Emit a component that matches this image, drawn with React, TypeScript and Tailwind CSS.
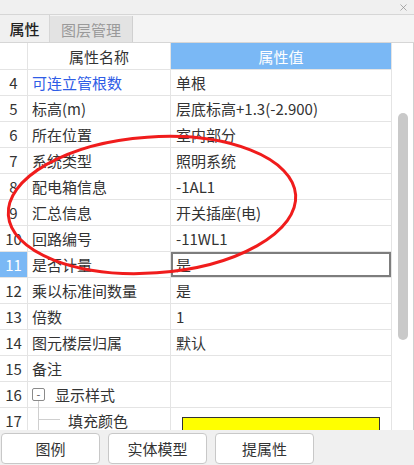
import { X } from 'lucide-react';

type Row = {
  no: number;
  name: string;
  value?: string;
  blue?: boolean;
  selected?: boolean;
};

const rows: Row[] = [
  { no: 4, name: '可连立管根数', value: '单根', blue: true },
  { no: 5, name: '标高(m)', value: '层底标高+1.3(-2.900)' },
  { no: 6, name: '所在位置', value: '室内部分' },
  { no: 7, name: '系统类型', value: '照明系统' },
  { no: 8, name: '配电箱信息', value: '-1AL1' },
  { no: 9, name: '汇总信息', value: '开关插座(电)' },
  { no: 10, name: '回路编号', value: '-11WL1' },
  { no: 11, name: '是否计量', value: '是', selected: true },
  { no: 12, name: '乘以标准间数量', value: '是' },
  { no: 13, name: '倍数', value: '1' },
  { no: 14, name: '图元楼层归属', value: '默认' },
  { no: 15, name: '备注', value: '' },
];

function PropRow({ row }: { row: Row }) {
  return (
    <div className="flex h-[26px] border-b border-[#e4e4e4]">
      <div
        className={`w-[28px] shrink-0 border-r border-[#e4e4e4] flex items-center justify-center ${
          row.selected ? 'bg-[#7ab8f5] text-white' : 'text-[#333]'
        }`}
      >
        {row.no}
      </div>
      <div
        className={`w-[143px] shrink-0 border-r border-[#e4e4e4] flex items-center pl-[4px] ${
          row.blue ? 'text-[#2f5de6]' : 'text-[#333]'
        }`}
      >
        {row.name}
      </div>
      <div
        className={`flex-1 flex items-center text-[#333] ${
          row.selected ? 'border-2 border-[#7d7d7d] pl-[3px]' : 'pl-[5px]'
        }`}
      >
        {row.value}
      </div>
    </div>
  );
}

export default function App() {
  return (
    <div className="relative w-[414px] h-[465px] overflow-hidden bg-[#f0f0f0] text-[15px] leading-none font-['Noto_Sans_CJK_SC','Microsoft_YaHei',sans-serif]">
      {/* title strip */}
      <div className="h-[15px] border-b border-[#d6d6d6] flex items-center justify-end pr-[5px]">
        <X size={11} strokeWidth={1.5} className="text-[#8a8a8a]" />
      </div>

      {/* tabs */}
      <div className="h-[28px] flex bg-[#f4f4f4] border-b border-[#d6d6d6]">
        <div className="w-[50px] flex items-center justify-center font-medium text-[#222] bg-[#f0f0f0] border-r border-[#d6d6d6]">
          属性
        </div>
        <div className="w-[83px] mt-[1px] flex items-center justify-center text-[#9a9a9a] bg-[#e3e3e3] border-r border-[#d0d0d0]">
          图层管理
        </div>
      </div>

      {/* grid + scrollbar */}
      <div className="flex h-[387px] bg-white">
        <div className="w-[392px] overflow-hidden border-r border-[#e4e4e4]">
          <div className="flex h-[27px] border-b border-[#e4e4e4]">
            <div className="w-[28px] shrink-0 border-r border-[#e4e4e4]" />
            <div className="w-[143px] shrink-0 border-r border-[#e4e4e4] flex items-center justify-center text-[#333]">
              属性名称
            </div>
            <div className="flex-1 bg-[#7ab8f5] flex items-center justify-center text-white">
              属性值
            </div>
          </div>

          {rows.map((r) => (
            <PropRow key={r.no} row={r} />
          ))}

          <div className="flex h-[26px] border-b border-[#e4e4e4]">
            <div className="w-[28px] shrink-0 border-r border-[#e4e4e4] flex items-center justify-center text-[#333]">
              16
            </div>
            <div className="relative w-[143px] shrink-0 border-r border-[#e4e4e4] flex items-center pl-[4px] text-[#333]">
              <span className="w-[13px] h-[13px] border border-[#8a8a8a] rounded-[2px] flex items-center justify-center text-[11px] text-[#555] mr-[10px]">
                -
              </span>
              显示样式
              <span className="absolute left-[10px] top-[19px] h-[8px] w-px bg-[#cfcfcf]" />
            </div>
            <div className="flex-1" />
          </div>

          <div className="flex h-[26px] border-b border-[#e4e4e4]">
            <div className="w-[28px] shrink-0 border-r border-[#e4e4e4] flex items-center justify-center text-[#333]">
              17
            </div>
            <div className="relative w-[143px] shrink-0 border-r border-[#e4e4e4] flex items-center pl-[40px] text-[#333]">
              <span className="absolute left-[10px] top-0 h-full w-px bg-[#cfcfcf]" />
              <span className="absolute left-[10px] top-[11px] w-[22px] h-px bg-[#cfcfcf]" />
              填充颜色
            </div>
            <div className="flex-1 pl-[11px] pt-[9px]">
              <div className="w-[198px] h-[16px] bg-[#ffff00] border border-[#333]" />
            </div>
          </div>
        </div>

        <div className="w-[22px] flex justify-center pt-[70px] border-r border-[#d0d0d0]">
          <div className="w-[10px] h-[227px] rounded-full bg-[#c9c9c9]" />
        </div>
      </div>

      {/* bottom buttons */}
      <div className="flex gap-[8px] pl-[1px] pt-[3px]">
        <button className="w-[99px] h-[31px] bg-white border border-[#c8c8c8] rounded-[4px] text-[#333]">
          图例
        </button>
        <button className="w-[99px] h-[31px] bg-white border border-[#c8c8c8] rounded-[4px] text-[#333]">
          实体模型
        </button>
        <button className="w-[99px] h-[31px] bg-white border border-[#c8c8c8] rounded-[4px] text-[#333]">
          提属性
        </button>
      </div>

      {/* annotation */}
      <svg className="absolute inset-0 pointer-events-none" width="414" height="465">
        <ellipse
          cx="152"
          cy="205"
          rx="144"
          ry="68"
          transform="rotate(-4 152 205)"
          fill="none"
          stroke="#f01c1c"
          strokeWidth="3"
        />
      </svg>
    </div>
  );
}
